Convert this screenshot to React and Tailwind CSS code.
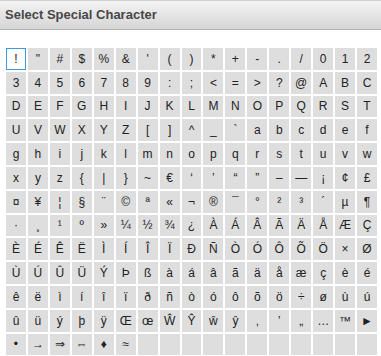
const rows = [
  "! \" # $ % & ' ( ) * + - . / 0 1 2",
  "3 4 5 6 7 8 9 : ; < = > ? @ A B C",
  "D E F G H I J K L M N O P Q R S T",
  "U V W X Y Z [ ] ^ _ ` a b c d e f",
  "g h i j k l m n o p q r s t u v w",
  "x y z { | } ~ € ‘ ’ “ ” – — ¡ ¢ £",
  "¤ ¥ ¦ § ¨ © ª « ¬ ® ¯ ° ² ³ ´ µ ¶",
  "· ¸ ¹ º » ¼ ½ ¾ ¿ À Á Â Ã Ä Å Æ Ç",
  "È É Ê Ë Ì Í Î Ï Ð Ñ Ò Ó Ô Õ Ö × Ø",
  "Ù Ú Û Ü Ý Þ ß à á â ã ä å æ ç è é",
  "ê ë ì í î ï ð ñ ò ó ô õ ö ÷ ø ù ú",
  "û ü ý þ ÿ Œ œ Ŵ Ŷ ŵ ŷ ‚ ‛ „ … ™ ►",
  "• → ⇒ ⇔ ♦ ≈",
];

const chars = rows.flatMap((r) => r.split(" "));
while (chars.length < 17 * 13) chars.push("");

export default function App() {
  return (
    <div className="w-[381px] h-[356px] overflow-hidden bg-white font-['Liberation_Sans',Arial,sans-serif]">
      {/* Title bar */}
      <div className="h-[30px] border-t border-[#cfcfcf] border-b border-b-[#b4b4b4] bg-gradient-to-b from-[#f4f4f4] to-[#d5d5d5] px-[5px] flex items-center">
        <span className="text-[13px] font-bold text-[#474747]">Select Special Character</span>
      </div>

      {/* Character grid */}
      <div className="pt-[18px] pl-[6px] pr-[4px] grid grid-cols-17 gap-x-[2px] gap-y-[2px] auto-rows-[21.8px]">
        {chars.map((c, i) => (
          <div
            key={i}
            className={
              i === 0
                ? "flex items-center justify-center bg-white border border-[#3b9ae6] text-[12px] text-[#222]"
                : "flex items-center justify-center bg-[#dedede] text-[12px] text-[#222]"
            }
          >
            {c}
          </div>
        ))}
      </div>
    </div>
  );
}
